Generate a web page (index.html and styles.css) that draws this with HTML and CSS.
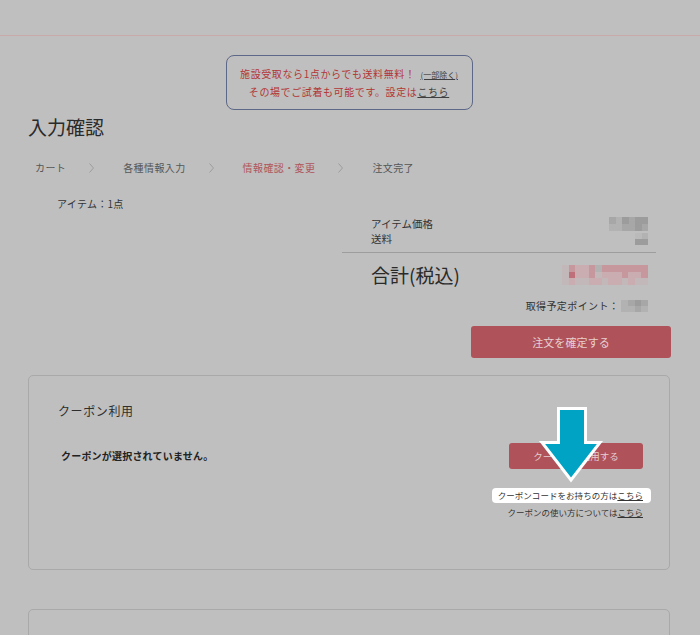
FILE: index.html
```html
<!DOCTYPE html>
<html lang="ja">
<head>
    <meta charset="UTF-8">
    <meta name="viewport" content="width=device-width, initial-scale=1.0">
    <title>入力確認</title>
    <link rel="stylesheet" href="styles.css">
</head>
<body>
    <div class="topbar"></div>

    <main class="page">
        <div class="notice">
            <p class="notice-line">施設受取なら1点からでも送料無料！<a class="notice-small" href="#">(一部除く)</a></p>
            <p class="notice-line">その場でご試着も可能です。設定は<a class="notice-link" href="#">こちら</a></p>
        </div>

        <h1 class="title">入力確認</h1>

        <ol class="steps">
            <li class="step">カート</li>
            <li class="chevron"><svg width="5" height="10" viewBox="0 0 5 10"><polyline points="0.5,0.5 4.5,5 0.5,9.5" fill="none" stroke="#9c9c9c" stroke-width="1"/></svg></li>
            <li class="step">各種情報入力</li>
            <li class="chevron"><svg width="5" height="10" viewBox="0 0 5 10"><polyline points="0.5,0.5 4.5,5 0.5,9.5" fill="none" stroke="#9c9c9c" stroke-width="1"/></svg></li>
            <li class="step current">情報確認・変更</li>
            <li class="chevron"><svg width="5" height="10" viewBox="0 0 5 10"><polyline points="0.5,0.5 4.5,5 0.5,9.5" fill="none" stroke="#9c9c9c" stroke-width="1"/></svg></li>
            <li class="step">注文完了</li>
        </ol>

        <p class="item-count">アイテム：1点</p>

        <div class="summary">
            <div class="sub-rows">
                <div class="row">
                    <span>アイテム価格</span>
                    <span class="mosaic price">
                        <i class="g2"></i><i class="g1"></i><i class="g3"></i><i class="g2"></i><i class="g3"></i><i class="g3"></i>
                        <i class="g1"></i><i class="g1"></i><i class="g2"></i><i class="g2"></i><i class="g3"></i><i class="g2"></i>
                    </span>
                </div>
                <div class="row">
                    <span>送料</span>
                    <span class="mosaic shipping">
                        <i class="g0"></i><i class="g1"></i>
                        <i class="g3"></i><i class="g3"></i>
                    </span>
                </div>
            </div>
            <div class="row total">
                <span>合計(税込)</span>
                <span class="mosaic total-value">
                    <i class="p0"></i><i class="p2"></i><i class="p1"></i><i class="p1"></i><i class="p2"></i><i class="g1"></i><i class="p2"></i><i class="p2"></i><i class="p2"></i><i class="p2"></i><i class="p2"></i><i class="p2"></i><i class="p2"></i>
                    <i class="p0"></i><i class="p3"></i><i class="p1"></i><i class="p1"></i><i class="p2"></i><i class="p0"></i><i class="p1"></i><i class="p1"></i><i class="p1"></i><i class="p2"></i><i class="p1"></i><i class="p1"></i><i class="p2"></i>
                    <i class="p0"></i><i class="p1"></i><i class="p0"></i><i class="p0"></i><i class="p1"></i><i class="p1"></i><i class="p0"></i><i class="p1"></i><i class="p1"></i><i class="p0"></i><i class="p1"></i><i class="p0"></i><i class="p0"></i>
                </span>
            </div>
            <div class="row points">
                <span class="points-label">取得予定ポイント：</span>
                <span class="mosaic point-value">
                    <i class="g1"></i><i class="g2"></i><i class="g3"></i><i class="g2"></i>
                    <i class="g1"></i><i class="g1"></i><i class="g2"></i><i class="g1"></i>
                </span>
            </div>
        </div>

        <div class="confirm">
            <button class="btn btn-order">注文を確定する</button>
        </div>

        <section class="panel coupon">
            <h2 class="panel-title">クーポン利用</h2>
            <div class="coupon-body">
                <p class="coupon-status">クーポンが選択されていません。</p>
                <div class="coupon-actions">
                    <button class="btn btn-coupon">クーポンを利用する</button>
                    <p class="coupon-link highlight">クーポンコードをお持ちの方は<a href="#">こちら</a></p>
                    <p class="coupon-link">クーポンの使い方については<a href="#">こちら</a></p>
                </div>
            </div>

            <svg class="pointer" width="68" height="82" viewBox="0 0 68 82">
                <polygon points="20.5,4.5 47.5,4.5 47.5,38.5 62,38.5 33,76 4,38.5 20.5,38.5" fill="#00a3c3" stroke="#ffffff" stroke-width="3" stroke-linejoin="miter"/>
            </svg>
        </section>

        <section class="panel next"></section>
    </main>
</body>
</html>
```

FILE: styles.css
```css
html {
    overflow: hidden;
}
body {
    margin: 0;
    padding: 0;
    background-color: #bfbfbf;
    font-family: "Noto Sans CJK JP", "Noto Sans", sans-serif;
    color: #2e2e2e;
}
p, h1, h2, ol {
    margin: 0;
    padding: 0;
}
a {
    color: #3a3a3a;
}
.topbar {
    height: 35px;
    border-bottom: 1px solid #c8aaaa;
}
.page {
    padding: 0 30px 0 28px;
}

/* notice */
.notice {
    width: 247px;
    height: 55px;
    box-sizing: border-box;
    margin: 19px auto 0;
    padding-top: 9px;
    border: 1px solid #5d6888;
    border-radius: 8px;
    text-align: center;
}
.notice-line {
    font-size: 10px;
    line-height: 17px;
    letter-spacing: 0.6px;
    color: #b33636;
}
.notice-small {
    margin-left: 5px;
    font-size: 8px;
    letter-spacing: 0;
    color: #3f3f3f;
}
.notice-link {
    color: #3f3f3f;
}

/* title + steps */
.title {
    margin-top: 5px;
    font-size: 19px;
    line-height: 24px;
    font-weight: normal;
    color: #2a2a2a;
}
.steps {
    display: flex;
    align-items: center;
    list-style: none;
    margin-top: 21px;
    padding-left: 7px;
}
.step {
    font-size: 10px;
    line-height: 16px;
    letter-spacing: 0.4px;
    color: #565656;
}
.step.current {
    color: #b0565c;
}
.chevron {
    display: flex;
    margin: 0 29px 0 23px;
}

/* summary */
.item-count {
    margin: 21px 0 0 29px;
    font-size: 10px;
    line-height: 14px;
    letter-spacing: 0.3px;
    color: #333;
}
.summary {
    width: 314px;
    margin: 5px 0 0 314px;
}
.sub-rows {
    padding-bottom: 6px;
    border-bottom: 1px solid #9d9d9d;
}
.row {
    display: flex;
    justify-content: space-between;
    align-items: center;
    padding: 0 8px 0 29px;
    font-size: 10.5px;
    line-height: 15px;
    color: #333;
}
.row.total {
    margin-top: 9px;
    font-size: 19px;
    line-height: 26px;
    color: #2a2a2a;
}
.row.points {
    justify-content: flex-end;
    margin-top: 11px;
    line-height: 14px;
    font-size: 10px;
    letter-spacing: 0.4px;
}
.points-label {
    margin-right: 2px;
}

/* pixelated amounts */
.mosaic {
    display: grid;
}
.mosaic i {
    display: block;
}
.price {
    grid-template-columns: repeat(6, 6.5px);
    grid-template-rows: 7px 7px;
}
.shipping {
    grid-template-columns: repeat(2, 6.5px);
    grid-template-rows: 6px 6px;
}
.total-value {
    grid-template-columns: repeat(13, 6.6px);
    grid-template-rows: repeat(3, 6.7px);
}
.point-value {
    grid-template-columns: repeat(4, 6.7px);
    grid-template-rows: 6px 6px;
}
.g0 { background: #bababa; }
.g1 { background: #b2b2b2; }
.g2 { background: #a7a7a7; }
.g3 { background: #9c9c9c; }
.p0 { background: #c3b8b9; }
.p1 { background: #c9adb1; }
.p2 { background: #c7979e; }
.p3 { background: #bf6f79; }

/* buttons */
.confirm {
    display: flex;
    justify-content: flex-end;
    margin: 13px -1px 0 0;
}
.btn {
    border: none;
    border-radius: 3px;
    background-color: #b0525a;
    color: #e6cfd1;
    font-family: inherit;
    cursor: pointer;
}
.btn-order {
    width: 200px;
    height: 32px;
    font-size: 11px;
    letter-spacing: 0.1px;
}
.btn-coupon {
    width: 134px;
    height: 26px;
    font-size: 9.5px;
    letter-spacing: 0;
}

/* coupon panel */
.panel {
    border: 1px solid #a9a9a9;
    border-radius: 5px;
}
.coupon {
    position: relative;
    height: 195px;
    box-sizing: border-box;
    margin-top: 17px;
    padding: 26px 26px 0 29px;
}
.panel-title {
    font-size: 12px;
    line-height: 18px;
    font-weight: normal;
    letter-spacing: 0.6px;
    color: #2e2e2e;
}
.coupon-body {
    display: flex;
    justify-content: space-between;
    align-items: flex-start;
    margin-top: 23px;
}
.coupon-status {
    margin-left: 3px;
    font-size: 10px;
    line-height: 26px;
    font-weight: bold;
    letter-spacing: 0.2px;
    color: #222;
}
.coupon-actions {
    display: flex;
    flex-direction: column;
    align-items: flex-end;
}
.coupon-link {
    font-size: 8.5px;
    line-height: 14px;
    color: #333;
    margin-top: 2px;
}
.coupon-link.highlight {
    margin: 19px -8px 0 0;
    padding: 0 8px 0 6px;
    line-height: 15px;
    letter-spacing: 0.05px;
    background: #ffffff;
    border-radius: 4px;
}
.coupon-link a {
    color: #333;
}
.pointer {
    position: absolute;
    left: 509px;
    top: 28px;
}
.next {
    height: 60px;
    margin-top: 39px;
}
```
